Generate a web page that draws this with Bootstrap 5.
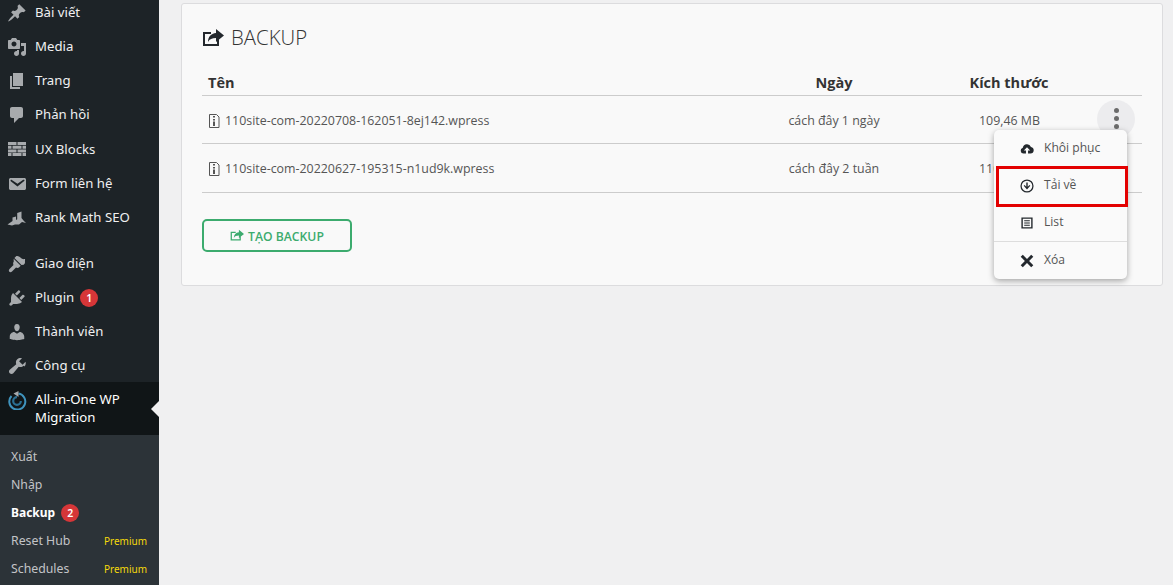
<!DOCTYPE html>
<html lang="vi">
<head>
<meta charset="utf-8">
<title>Backup</title>
<link href="https://cdn.jsdelivr.net/npm/bootstrap@5.3.0/dist/css/bootstrap.min.css" rel="stylesheet">
<style>
html,body{height:585px;overflow:hidden}
body{background:#f0f0f1;font-family:"Open Sans","Liberation Sans",sans-serif;color:#444}
.shell{height:585px;overflow:hidden}
.side{width:159px;flex:none;background:#1d2327;height:585px;overflow:hidden;font-family:"Noto Sans","Open Sans",sans-serif;font-size:13.2px;color:#f0f0f1}
.side-list{margin-top:-4px;margin-bottom:-1px}
.side-item{height:34.1px;gap:8px;padding-left:7px}
.side-gap{height:12px}
.side-ic{width:20px;height:20px;flex:none;fill:#a7aaad}
.side-pill{width:18px;height:18px;border-radius:50%;background:#d63638;color:#fff;font-size:10.5px;font-weight:600;line-height:18px;text-align:center;margin-left:6px}
.side-item .side-pill{margin-left:-2px}
.side-active{background:#101517;height:53px;color:#fff;padding-left:7px;gap:8px;line-height:18px;padding-top:8px}
.side-arrow{position:absolute;right:0;top:19px;width:0;height:0;border:8px solid transparent;border-right-color:#f0f0f1;border-left-width:0}
.sub{background:#2c3338;padding-top:8px;height:150px;color:#c3c4c7;font-size:12.3px}
.sub-item{height:28px;padding:0 12px 0 11px}
.sub-cur{color:#fff;font-weight:700;font-size:12px}
.prem{color:#f5d90a;font-size:10px}
.main-pane{padding:3px 11px 0 22px}
.panel{background:#f9f9f9;border:1px solid #dcdcde;border-radius:3px;height:283px;padding:19px 20px 0;position:relative}
.ttl{font-size:20.4px;font-weight:300;color:#333;height:30px;gap:7px;margin-bottom:16px}
.ttl span{padding-bottom:2px}
.ttl svg{width:22px;height:20px;fill:#23282d}
.tbl-row{display:grid;grid-template-columns:542px 180px 170px 48px;align-items:center;border-bottom:1px solid #ccc;font-size:12.4px;color:#555}
.tbl-head{height:27px;font-size:14.5px;font-weight:700;color:#333;padding-top:1px}
.tbl-row-a{height:48px}
.tbl-row-b{height:49px}
.tbl-row-a>.txt-cell{padding-top:3px}
.tbl-row-b>.txt-cell{padding-top:2px}
.tbl-name{padding-left:6px;gap:5px}
.tbl-mid{text-align:center}
.tbl-size{padding-left:55px;white-space:nowrap}
.file-ic{width:12px;height:14px;flex:none}
.kebab{width:38px;height:38px;border-radius:50%;background:#ececee;position:absolute;right:7px;top:-2px}
.kebab-wrap{position:relative;height:36px}
.kebab i{display:block;width:5px;height:5px;border-radius:50%;background:#6b6b6b;margin:1.5px 0}
.mk-btn{width:150px;height:33px;border:2px solid #3cab6e;border-radius:5px;background:transparent;color:#3cab6e;font-size:12.2px;font-weight:600;margin-top:26px;gap:4px;padding:0}
.mk-btn span{padding-top:3px}
.mk-btn svg{width:14px;height:13px;fill:#3cab6e}
.pop{position:absolute;left:812px;top:126px;width:133px;height:149px;background:#fafafa;border-radius:5px;box-shadow:0 2px 6px rgba(0,0,0,.35);font-size:12.1px;color:#555;z-index:3}
.pop-item{height:37px;gap:10px;padding-left:26px}
.pop-item svg{width:14px;height:14px;flex:none;fill:#23282d}
.pop-sep{border-top:1px solid #ddd;height:38px}
.hilite{position:absolute;left:814px;top:162px;width:132px;height:41px;border:3px solid #e30000;z-index:4}
</style>
</head>
<body>
<div class="shell d-flex">
  <aside class="side">
    <div class="side-list">
      <div class="side-item d-flex align-items-center"><svg class="side-ic" viewBox="0 0 20 20"><path d="M10.44 3.02l1.82-1.82 6.36 6.35-1.83 1.82c-1.05-.68-2.48-.57-3.41.36l-.75.75c-.92.93-1.04 2.35-.35 3.41l-1.83 1.82-2.41-2.41-2.8 2.79c-.42.42-3.38 2.71-3.8 2.29s1.86-3.39 2.28-3.81l2.79-2.79L4.1 9.36l1.83-1.82c1.05.69 2.48.57 3.4-.36l.75-.75c.93-.92 1.05-2.35.36-3.41z"/></svg><span>Bài viết</span></div>
      <div class="side-item d-flex align-items-center"><svg class="side-ic" viewBox="0 0 20 20"><path d="M13 11V4c0-.55-.45-1-1-1h-1.670L9 1H5L3.670 3H2c-.55 0-1 .45-1 1v7c0 .55.45 1 1 1h10c.55 0 1-.45 1-1zM7 4.500c1.380 0 2.500 1.120 2.500 2.500S8.380 9.500 7 9.500 4.500 8.380 4.500 7 5.620 4.500 7 4.500zM14 6h5v10.500c0 1.380-1.120 2.500-2.500 2.500S14 17.880 14 16.500s1.120-2.500 2.500-2.500c.17 0 .34.02.5.05V9h-3V6zm-4 8.050V13h2v3.500c0 1.380-1.120 2.500-2.500 2.500S7 17.880 7 16.500 8.120 14 9.500 14c.17 0 .34.02.5.05z"/></svg><span>Media</span></div>
      <div class="side-item d-flex align-items-center"><svg class="side-ic" viewBox="0 0 20 20"><path d="M6 15V2h10v13H6zm-1 1h8v2H3V5h2v11z"/></svg><span>Trang</span></div>
      <div class="side-item d-flex align-items-center"><svg class="side-ic" viewBox="0 0 20 20"><path d="M5 2h9c1.100 0 2 .9 2 2v7c0 1.100-.9 2-2 2h-2l-5 5v-5H5c-1.100 0-2-.9-2-2V4c0-1.100.9-2 2-2z"/></svg><span>Phản hồi</span></div>
      <div class="side-item d-flex align-items-center"><svg class="side-ic" viewBox="0 0 20 20"><path d="M1 3h8.500v3H1zm9.500 0H19v3h-8.500zM1 6.700h3.500v3H1zm4.500 0h9v3h-9zm10 0H19v3h-3.500zM1 10.400h8.500v3H1zm9.500 0H19v3h-8.500zM1 14.100h3.500V17H1zm4.500 0h9V17h-9zm10 0H19V17h-3.500z"/></svg><span>UX Blocks</span></div>
      <div class="side-item d-flex align-items-center"><svg class="side-ic" viewBox="0 0 20 20"><path d="M3.870 4h13.250C18.370 4 19 4.590 19 5.790v8.420c0 1.190-.63 1.790-1.880 1.790H3.870c-1.250 0-1.880-.6-1.880-1.790V5.790c0-1.200.63-1.790 1.880-1.790zm6.620 8.600l6.740-5.530c.24-.2.43-.66.13-1.070-.29-.41-.82-.42-1.170-.17l-5.700 3.860L4.800 6c-.35-.25-.88-.24-1.170.17-.3.41-.11.87.13 1.070z"/></svg><span>Form liên hệ</span></div>
      <div class="side-item d-flex align-items-center"><svg class="side-ic" viewBox="0 0 20 20"><path d="M.5 16.500l5-3.500V9.500l3.500-1V12l1.200-.8V5l4.300-1.500V10l2 2.500 2.500 2.500-4-1-3 2.500H8l-3 1z"/></svg><span class="text-nowrap">Rank Math SEO</span></div>
      <div class="side-gap"></div>
      <div class="side-item d-flex align-items-center"><svg class="side-ic" viewBox="0 0 20 20"><path d="M14.500 11 7.400 4l1.500-1.500c.5-.6 2.300-.5 3.500.3 1.200.8 1.400 1.300 2.700 2 1 .6 3 .2 3 .2s-.2 1.700-.1 2.700c.1 1.500-.3 2-1.300 3zM6.700 4.800l7 7-1.500 1.500c-.9.900-2.400.6-3.200.2L5 17.500c-.8.800-2 .9-2.700.2-.7-.7-.6-1.900.2-2.700l4-4c-.4-.8-.7-2.300.2-3.200z"/></svg><span>Giao diện</span></div>
      <div class="side-item d-flex align-items-center"><svg class="side-ic" viewBox="0 0 20 20"><path d="M13.110 4.360L9.870 7.600 8 5.730l3.240-3.240c.35-.34 1.050-.2 1.560.32.52.51.66 1.210.31 1.550zm-8 1.770l.91-1.120 9.010 9.010-1.190.84c-.71.71-2.630 1.160-3.820 1.160H6.140L4.900 17.260c-.59.59-1.540.59-2.120 0-.59-.58-.59-1.530 0-2.120l1.240-1.240v-3.880c0-1.130.4-3.190 1.090-3.890zm7.260 3.970l3.240-3.240c.34-.35 1.040-.21 1.550.31.52.51.66 1.210.31 1.550l-3.240 3.250z"/></svg><span>Plugin</span><span class="side-pill">1</span></div>
      <div class="side-item d-flex align-items-center"><svg class="side-ic" viewBox="0 0 20 20"><path d="M10 9.250c-2.270 0-2.730-3.440-2.730-3.440C7 4.020 7.820 2 9.970 2c2.160 0 2.980 2.020 2.710 3.810 0 0-.41 3.440-2.680 3.440zm0 2.570L12.720 10c2.390 0 4.520 2.330 4.520 4.530v2.490s-3.650 1.130-7.240 1.130c-3.650 0-7.240-1.130-7.240-1.130v-2.490c0-2.250 1.940-4.480 4.480-4.480z"/></svg><span>Thành viên</span></div>
      <div class="side-item d-flex align-items-center"><svg class="side-ic" viewBox="0 0 20 20"><path d="M16.680 9.770c-1.340 1.340-3.300 1.670-4.950.99l-5.410 6.520c-.99.99-2.590.99-3.580 0s-.99-2.590 0-3.570l6.520-5.420c-.68-1.650-.35-3.610.99-4.950 1.280-1.280 3.120-1.640 4.730-1.090l-2.900 2.900 3.530 3.530 2.900-2.900c.55 1.610.19 3.450-1.090 4.730z"/></svg><span>Công cụ</span></div>
    </div>
    <div class="side-active d-flex position-relative">
      <svg class="side-ic" viewBox="0 0 20 20"><path d="M4.500 6a8 8 0 1 0 7-2.400" fill="none" stroke="#3f93bd" stroke-width="2"/><path d="M10 7.200a3.800 3.800 0 1 0 3.800 3.800" fill="none" stroke="#2a6f92" stroke-width="2.200"/><path d="M6.500 3.500l5-2.500v6z" fill="#a7aaad"/></svg>
      <span>All-in-One WP<br>Migration</span>
      <span class="side-arrow"></span>
    </div>
    <div class="sub">
      <div class="sub-item d-flex align-items-center">Xuất</div>
      <div class="sub-item d-flex align-items-center">Nhập</div>
      <div class="sub-item d-flex align-items-center sub-cur">Backup<span class="side-pill">2</span></div>
      <div class="sub-item d-flex align-items-center justify-content-between">Reset Hub<span class="prem">Premium</span></div>
      <div class="sub-item d-flex align-items-center justify-content-between">Schedules<span class="prem">Premium</span></div>
    </div>
  </aside>
  <main class="main-pane flex-grow-1">
    <section class="panel">
      <div class="ttl d-flex align-items-center"><svg viewBox="0 0 22 20"><path d="M14 1l8 6.500-8 6.500V10c-4 0-6.500 1-8 4 0-5 3-8.500 8-9zM1 4h8v2H3v10h12v-3l2-1.500V18H1z"/></svg><span>BACKUP</span></div>
      <div class="tbl-row tbl-head"><div class="tbl-name">Tên</div><div class="tbl-mid">Ngày</div><div class="tbl-mid">Kích thước</div><div></div></div>
      <div class="tbl-row tbl-row-a">
        <div class="tbl-name txt-cell d-flex align-items-center"><svg class="file-ic" viewBox="0 0 12 14"><path d="M1.500.5h7l2.500 2.500v10.500H1.500z" fill="none" stroke="#555"/><path d="M5 2h2v1.500H5zM5 5h2v1.500H5zM5 7.500h2V12H5z" fill="#555"/></svg><span>110site-com-20220708-162051-8ej142.wpress</span></div>
        <div class="tbl-mid txt-cell">cách đây 1 ngày</div>
        <div class="tbl-size txt-cell">109,46 MB</div>
        <div class="kebab-wrap"><div class="kebab d-flex flex-column align-items-center justify-content-center"><i></i><i></i><i></i></div></div>
      </div>
      <div class="tbl-row tbl-row-b">
        <div class="tbl-name txt-cell d-flex align-items-center"><svg class="file-ic" viewBox="0 0 12 14"><path d="M1.500.5h7l2.500 2.500v10.500H1.500z" fill="none" stroke="#555"/><path d="M5 2h2v1.500H5zM5 5h2v1.500H5zM5 7.500h2V12H5z" fill="#555"/></svg><span>110site-com-20220627-195315-n1ud9k.wpress</span></div>
        <div class="tbl-mid txt-cell">cách đây 2 tuần</div>
        <div class="tbl-size txt-cell">110,12 MB</div>
        <div></div>
      </div>
      <button class="mk-btn btn d-flex align-items-center justify-content-center" type="button"><svg viewBox="0 0 22 20"><path d="M14 1l8 6.500-8 6.500V10c-4 0-6.500 1-8 4 0-5 3-8.500 8-9zM1 4h8v2H3v10h12v-3l2-1.500V18H1z"/></svg><span>TẠO BACKUP</span></button>
      <div class="pop">
        <div class="pop-item d-flex align-items-center"><svg viewBox="0 0 20 20"><path d="M5 16.500a4.300 4.300 0 0 1-1-8.400A6.200 6.200 0 0 1 15.700 7 4.800 4.800 0 0 1 15 16.500z"/><path d="M10 7.500l4.500 4.500h-3v5h-3v-5h-3z" fill="#fafafa"/></svg><span>Khôi phục</span></div>
        <div class="pop-item d-flex align-items-center"><svg viewBox="0 0 20 20"><circle cx="10" cy="10" r="8.500" fill="none" stroke="#23282d" stroke-width="1.800"/><path d="M9 5h2v6l2.500-2.500 1.200 1.200L10 15l-4.700-5.300L6.500 8.500 9 11z"/></svg><span>Tải về</span></div>
        <div class="pop-item d-flex align-items-center"><svg viewBox="0 0 20 20"><path d="M2 2h16v16H2zm2 2v12h12V4zm2 2h8v1.500H6zm0 3.200h8v1.500H6zm0 3.300h8V14H6z"/></svg><span>List</span></div>
        <div class="pop-item d-flex align-items-center pop-sep"><svg viewBox="0 0 20 20"><path d="M4 1l6 6 6-6 3 3-6 6 6 6-3 3-6-6-6 6-3-3 6-6-6-6z"/></svg><span>Xóa</span></div>
      </div>
      <div class="hilite"></div>
    </section>
  </main>
</div>
</body>
</html>
